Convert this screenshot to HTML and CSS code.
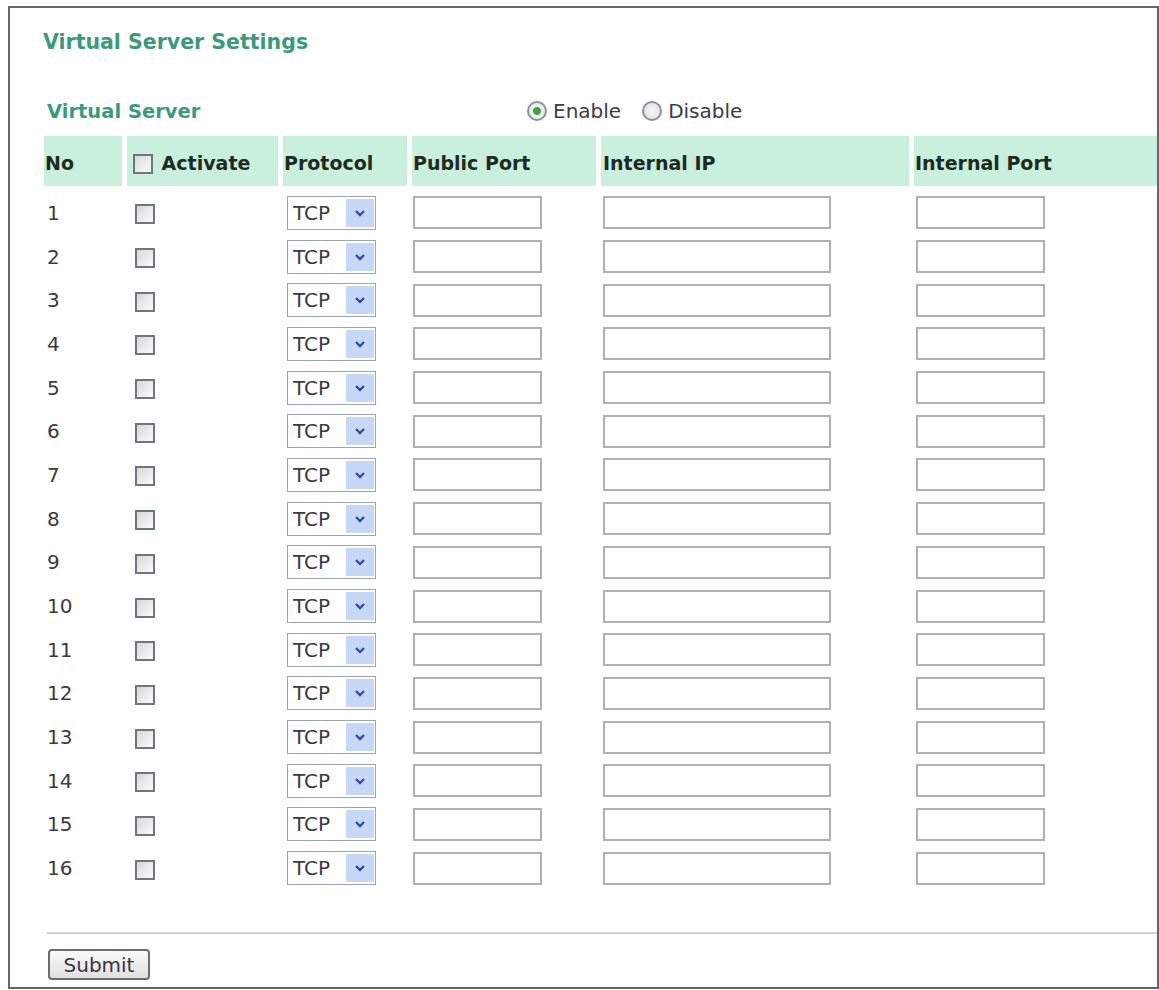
FILE: index.html
```html
<!DOCTYPE html>
<html lang="en">
<head>
  <meta charset="UTF-8">
  <title>Virtual Server Settings</title>
  <link rel="stylesheet" href="styles.css">
</head>
<body>
  <div class="frame">
    <h2 class="title">Virtual Server Settings</h2>

    <div class="section-head">
      <span class="label">Virtual Server</span>
      <label class="radio"><input type="radio" name="vs" checked>Enable</label>
      <label class="radio"><input type="radio" name="vs">Disable</label>
    </div>

    <table class="vs-table">
      <colgroup>
        <col class="c-no"><col class="c-act"><col class="c-proto"><col class="c-pub"><col class="c-ip"><col class="c-int">
      </colgroup>
      <thead>
        <tr>
          <th>No</th>
          <th class="act"><input type="checkbox" class="check"> Activate</th>
          <th>Protocol</th>
          <th>Public Port</th>
          <th class="ip">Internal IP</th>
          <th>Internal Port</th>
        </tr>
      </thead>
      <tbody id="rows"></tbody>
    </table>

    <hr class="rule">
    <button class="submit">Submit</button>
  </div>

  <script>
    // Build the 16 virtual server rows
    const rows = document.getElementById('rows');
    for (let i = 1; i <= 16; i++) {
      const tr = document.createElement('tr');
      tr.innerHTML = `
        <td class="no">${i}</td>
        <td class="act"><input type="checkbox" class="check"></td>
        <td class="proto"><span class="select"><select><option>TCP</option><option>UDP</option></select><span class="arrow"><svg width="12" height="10" viewBox="0 0 12 10"><polyline points="2,3 6,7 10,3" fill="none" stroke="#2d4f9e" stroke-width="2.4"/></svg></span></span></td>
        <td><input type="text" class="field port"></td>
        <td class="ip"><input type="text" class="field wide"></td>
        <td class="ip"><input type="text" class="field port"></td>`;
      rows.appendChild(tr);
    }
  </script>
</body>
</html>
```

FILE: styles.css
```css
body {
  margin: 0;
  font-family: "DejaVu Sans", Verdana, sans-serif;
  color: #3d3a44;
  background: #fff;
}

.frame {
  box-sizing: border-box;
  width: 1151px;
  height: 983px;
  margin: 6px 0 0 8px;
  border: 2px solid #666;
  padding: 0 0 0 34px;
  overflow: hidden;
}

.title {
  margin: 24px 0 0 -1px;
  font-size: 20.5px;
  line-height: 20px;
  font-weight: bold;
  color: #3b9a7c;
}

.section-head {
  display: flex;
  align-items: center;
  height: 24px;
  margin-top: 47px;
  font-size: 20px;
}

.section-head .label {
  width: 480px;
  padding-left: 3px;
  font-size: 19.5px;
  font-weight: bold;
  color: #3b9a7c;
}

.radio {
  display: flex;
  align-items: center;
  gap: 6px;
  margin-right: 21px;
  color: #3d3a44;
}

.radio input {
  appearance: none;
  box-sizing: border-box;
  width: 20px;
  height: 20px;
  margin: 0;
  border: 2px solid #8a949e;
  border-radius: 50%;
  background: radial-gradient(circle, #f6f6f6 0, #dedede 100%);
}

.radio input:checked {
  background: radial-gradient(circle, #3ea23e 0 3.5px, #f4f4f4 4.5px, #dcdcdc 100%);
}

/* table */
.vs-table {
  table-layout: fixed;
  width: 1125px;
  margin: 13px 0 0 -5px;
  border-collapse: separate;
  border-spacing: 5px 0;
  font-size: 20px;
}

.c-no { width: 78px; }
.c-act { width: 151px; }
.c-proto { width: 124px; }
.c-pub { width: 184px; }
.c-ip { width: 308px; }
.c-int { width: 245px; }

.vs-table th {
  height: 50px;
  padding: 4px 0 0 1px;
  box-sizing: border-box;
  background: #c8f0dc;
  color: #1e2a22;
  text-align: left;
  font-size: 19px;
  font-weight: bold;
  white-space: nowrap;
}

.vs-table th.act {
  padding-left: 6px;
}

.vs-table th.ip {
  padding-left: 2px;
}

.vs-table th .check {
  margin-right: 2px;
  vertical-align: -4px;
}

.vs-table td {
  height: 43.7px;
  padding: 0 0 0 1px;
  vertical-align: middle;
}

.vs-table tbody tr:first-child td {
  padding-top: 5px;
}

.vs-table td.no {
  padding-left: 3px;
}

.vs-table td.act {
  padding-left: 8px;
}

.vs-table td.proto {
  padding-left: 4px;
}

.vs-table td.ip {
  padding-left: 2px;
}

.check {
  appearance: none;
  box-sizing: border-box;
  width: 20px;
  height: 20px;
  margin: 0;
  border: 2px solid #6f7680;
  background: linear-gradient(135deg, #d8d8d8, #fbfbfb);
  display: inline-block;
  vertical-align: middle;
}

.select {
  display: inline-flex;
  box-sizing: border-box;
  width: 89px;
  height: 34px;
  border: 1px solid #9aa4b4;
  background: #fff;
  vertical-align: middle;
}

.select select {
  appearance: none;
  flex: 1;
  min-width: 0;
  border: 0;
  padding: 0 0 0 5px;
  background: transparent;
  font: 20px "DejaVu Sans", Verdana, sans-serif;
  color: #3d3a44;
}

.select .arrow {
  width: 28px;
  margin: 2px 1px 2px 0;
  background: #c7d8f6;
  display: flex;
  align-items: center;
  justify-content: center;
}

.field {
  box-sizing: border-box;
  height: 33px;
  border: 2px solid #b0b0b0;
  background: #fff;
  vertical-align: middle;
}

.field.port {
  width: 129px;
}

.field.wide {
  width: 228px;
}

.rule {
  margin: 42px 0 0 3px;
  height: 2px;
  border: 0;
  background: #d2d3c8;
}

.submit {
  display: block;
  margin: 15px 0 0 4px;
  width: 102px;
  height: 31px;
  border: 2px solid #6c6c6c;
  border-radius: 4px;
  background: linear-gradient(#fafafa, #e0e0e0);
  font: 20px/1 "DejaVu Sans", Verdana, sans-serif;
  color: #3d3440;
  padding: 0;
}
```
